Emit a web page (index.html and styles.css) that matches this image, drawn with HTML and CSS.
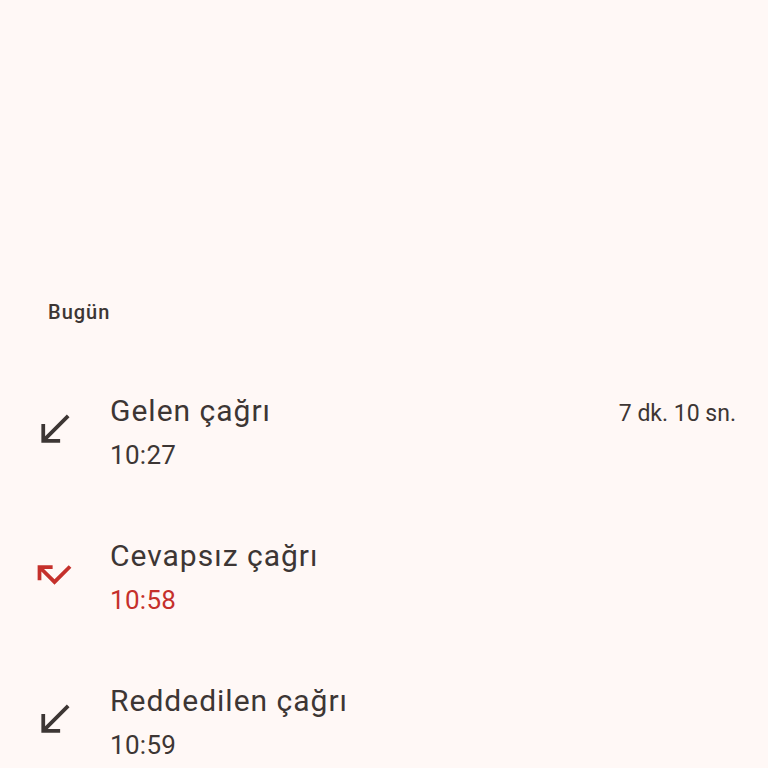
FILE: index.html
```html
<!DOCTYPE html>
<html lang="tr">
<head>
<meta charset="utf-8">
<title>Arama geçmişi</title>
<link rel="stylesheet" href="styles.css">
</head>
<body>
<main class="list">
  <h2 class="section">Bugün</h2>
  <div class="row">
    <svg class="icon" viewBox="0 0 24 24"><path d="M20 5.41L18.59 4 7 15.59V9H5v10h10v-2H8.41z"/></svg>
    <div class="texts">
      <div class="line">
        <span class="title">Gelen çağrı</span>
        <span class="duration">7 dk. 10 sn.</span>
      </div>
      <div class="time">10:27</div>
    </div>
  </div>
  <div class="row missed">
    <svg class="icon" viewBox="0 0 24 24"><path d="M19.59 7L12 14.59 6.41 9H11V7H3v8h2v-4.59l7 7 9-9z"/></svg>
    <div class="texts">
      <div class="line">
        <span class="title">Cevapsız çağrı</span>
      </div>
      <div class="time">10:58</div>
    </div>
  </div>
  <div class="row">
    <svg class="icon" viewBox="0 0 24 24"><path d="M20 5.41L18.59 4 7 15.59V9H5v10h10v-2H8.41z"/></svg>
    <div class="texts">
      <div class="line">
        <span class="title">Reddedilen çağrı</span>
      </div>
      <div class="time">10:59</div>
    </div>
  </div>
</main>
</body>
</html>
```
FILE: styles.css
```css
html, body {
  margin: 0;
  padding: 0;
  background: #fff8f6;
  height: 100%;
  overflow: hidden;
}
body {
  font-family: Roboto, "Noto Sans", sans-serif;
  color: #3d3634;
}
.list {
  padding-top: 298px;
}
.section {
  margin: 0 0 31px 48px;
  font-size: 20px;
  line-height: 28px;
  font-weight: 500;
  letter-spacing: 1px;
  color: #3d3634;
}
.row {
  display: flex;
  align-items: center;
  height: 145px;
  padding: 0 32px 0 32px;
}
.icon {
  width: 45px;
  height: 45px;
  flex: none;
  fill: #3d3634;
  margin-right: 33px;
}
.missed .icon {
  fill: #c5302b;
}
.texts {
  flex: 1;
  padding-top: 7px;
}
.line {
  display: flex;
  justify-content: space-between;
  align-items: baseline;
}
.title {
  font-size: 30px;
  line-height: 44px;
  letter-spacing: 1px;
}
.duration {
  font-size: 23px;
  letter-spacing: 0;
}
.time {
  font-size: 26px;
  line-height: 44px;
  letter-spacing: 0.3px;
}
.missed .time {
  color: #c5302b;
}
```
